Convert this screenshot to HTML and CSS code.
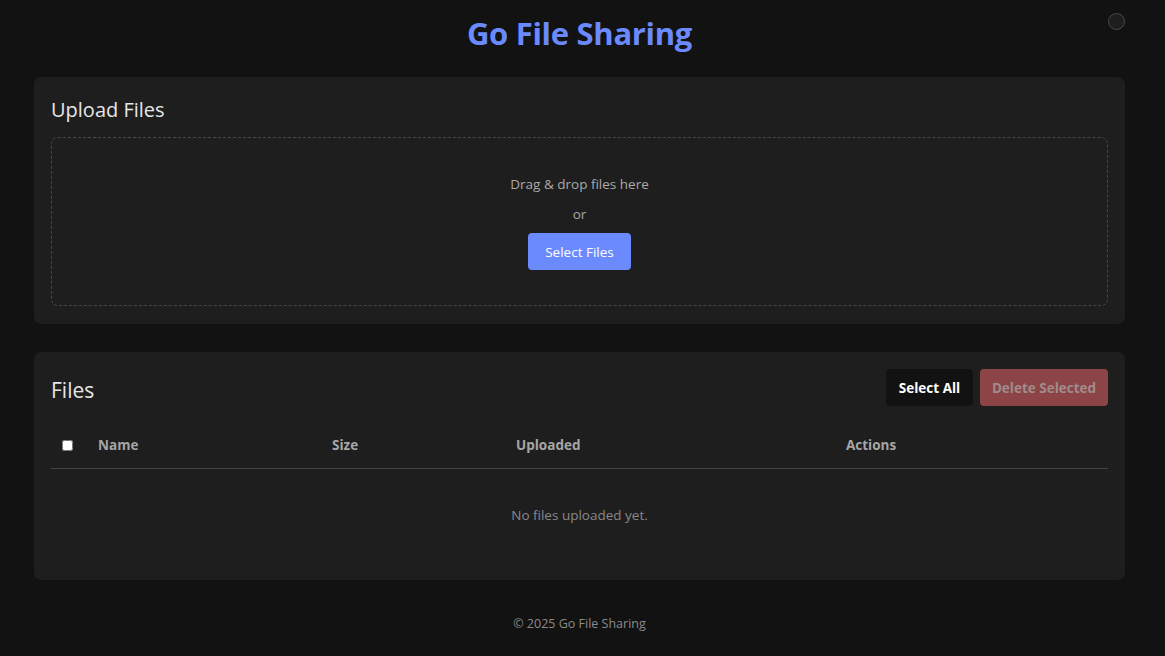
FILE: index.html
```html
<!DOCTYPE html>
<html lang="en">
<head>
<meta charset="utf-8">
<title>Go File Sharing</title>
<link rel="stylesheet" href="styles.css">
</head>
<body>
<div class="page">
  <header class="top">
    <h1 class="title">Go File Sharing</h1>
    <button class="theme-toggle" aria-label="Toggle theme"></button>
  </header>

  <section class="card upload-card">
    <h2 class="card-title">Upload Files</h2>
    <div class="dropzone">
      <p class="drop-text">Drag &amp; drop files here</p>
      <p class="drop-or">or</p>
      <button class="btn btn-primary">Select Files</button>
    </div>
  </section>

  <section class="card files-card">
    <div class="files-head">
      <h2 class="card-title">Files</h2>
      <div class="actions">
        <button class="btn btn-dark">Select All</button>
        <button class="btn btn-danger" disabled>Delete Selected</button>
      </div>
    </div>
    <table class="files-table">
      <colgroup>
        <col class="c-check"><col class="c-name"><col class="c-size"><col class="c-up"><col>
      </colgroup>
      <thead>
        <tr>
          <th class="th-check"><input type="checkbox" class="check"></th>
          <th>Name</th>
          <th>Size</th>
          <th>Uploaded</th>
          <th>Actions</th>
        </tr>
      </thead>
      <tbody>
        <tr><td colspan="5" class="empty">No files uploaded yet.</td></tr>
      </tbody>
    </table>
  </section>

  <footer class="foot">© 2025 Go File Sharing</footer>
</div>
</body>
</html>
```

FILE: styles.css
```css
* { box-sizing: border-box; }
html, body { margin: 0; padding: 0; }
body {
  background: #121212;
  color: #e0e0e0;
  font-family: "Open Sans", "Noto Sans", "DejaVu Sans", sans-serif;
  font-size: 14px;
}
.page {
  padding: 0 40px 0 34px;
}
.top {
  position: relative;
  height: 77px;
  display: flex;
  align-items: center;
  justify-content: center;
  padding-bottom: 12px;
}
.title {
  margin: 0;
  font-size: 31px;
  font-weight: 700;
  color: #6b8afd;
  letter-spacing: -0.3px;
}
.theme-toggle {
  position: absolute;
  right: 0;
  top: 13px;
  width: 17px;
  height: 17px;
  border-radius: 50%;
  border: 1px solid #4a4a4a;
  background: #1e1e1e;
  padding: 0;
}
.card {
  background: #1e1e1e;
  border-radius: 7px;
  padding: 18px 17px;
}
.upload-card { margin-bottom: 28px; }
.card-title {
  margin: 0;
  font-size: 20px;
  font-weight: 400;
  line-height: 28px;
  color: #e6e6e6;
}
.upload-card .card-title { margin-bottom: 14px; padding-top: 1px; }
.upload-card .card-title + .dropzone { margin-top: -1px; }
.dropzone {
  border: 1px dashed #474747;
  border-radius: 7px;
  height: 169px;
  display: flex;
  flex-direction: column;
  align-items: center;
  padding-top: 36px;
}
.drop-text, .drop-or {
  margin: 0;
  line-height: 21px;
  color: #aaaaaa;
  font-size: 13.5px;
}
.drop-or { margin-top: 9px; }
.btn {
  font-family: inherit;
  font-size: 13.5px;
  border: none;
  border-radius: 4px;
  height: 37px;
  padding: 0 16px;
  cursor: pointer;
}
.btn-primary {
  margin-top: 8px;
  background: #6b8afd;
  color: #ffffff;
  width: 103px;
}
.files-card { padding-top: 17px; padding-bottom: 18px; }
.files-head {
  display: flex;
  align-items: center;
  justify-content: space-between;
  margin-bottom: 17px;
}
.files-head .card-title { padding-top: 4px; font-size: 21px; }
.actions { display: flex; gap: 7px; }
.btn-dark {
  background: #121212;
  color: #ffffff;
  font-weight: 700;
  width: 87px;
  padding: 0;
}
.btn-danger {
  background: #8c4446;
  color: #a08c8c;
  font-weight: 700;
  width: 128px;
  padding: 0;
}
.files-table {
  width: 100%;
  border-collapse: collapse;
  table-layout: fixed;
}
.c-check { width: 35px; }
.c-name { width: 234px; }
.c-size { width: 184px; }
.c-up { width: 330px; }
.files-table th {
  text-align: left;
  padding: 12px;
  line-height: 21px;
  font-size: 13.5px;
  font-weight: 700;
  color: #a6a6a6;
  border-bottom: 1px solid #444444;
}
.files-table th.th-check { padding: 12px 0 12px 11px; }
.check {
  margin: 0;
  width: 11px;
  height: 11px;
  vertical-align: -1px;
}
.empty {
  text-align: center;
  padding: 36px 12px;
  line-height: 21px;
  color: #888888;
  font-size: 13.5px;
}
.foot {
  text-align: center;
  color: #8a8a8a;
  font-size: 12.5px;
  padding-top: 35px;
  line-height: 18px;
}
```
